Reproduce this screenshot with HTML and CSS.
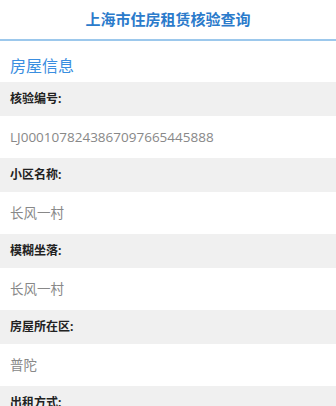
FILE: index.html
```html
<!DOCTYPE html>
<html lang="zh-CN">
<head>
    <meta charset="UTF-8">
    <title>上海市住房租赁核验查询</title>
    <link rel="stylesheet" href="styles.css">
</head>
<body>
    <div class="header">上海市住房租赁核验查询</div>

    <h2 class="section-title">房屋信息</h2>

    <div class="info-list">
        <div class="label">核验编号:</div>
        <div class="value">LJ0001078243867097665445888</div>
        <div class="label">小区名称:</div>
        <div class="value">长风一村</div>
        <div class="label">模糊坐落:</div>
        <div class="value">长风一村</div>
        <div class="label">房屋所在区:</div>
        <div class="value">普陀</div>
        <div class="label">出租方式:</div>
        <div class="value">整租</div>
    </div>
</body>
</html>
```

FILE: styles.css
```css
body {
    font-family: "Open Sans", "Noto Sans CJK SC", sans-serif;
    background-color: #ffffff;
    margin: 0;
    padding: 0;
}
.header {
    height: 39px;
    line-height: 39px;
    text-align: center;
    font-size: 15px;
    font-weight: bold;
    color: #2b7bcb;
    border-bottom: 2px solid #9cc8ec;
}
.section-title {
    margin: 0;
    height: 41px;
    line-height: 50px;
    padding-left: 10px;
    font-size: 16px;
    font-weight: normal;
    color: #3a8ee0;
}
.label {
    height: 34px;
    line-height: 34px;
    padding-left: 10px;
    background-color: #f0f0f0;
    font-size: 12px;
    font-weight: bold;
    color: #222;
}
.value {
    height: 42px;
    line-height: 42px;
    padding-left: 10px;
    font-size: 13.5px;
    color: #888;
}
```
